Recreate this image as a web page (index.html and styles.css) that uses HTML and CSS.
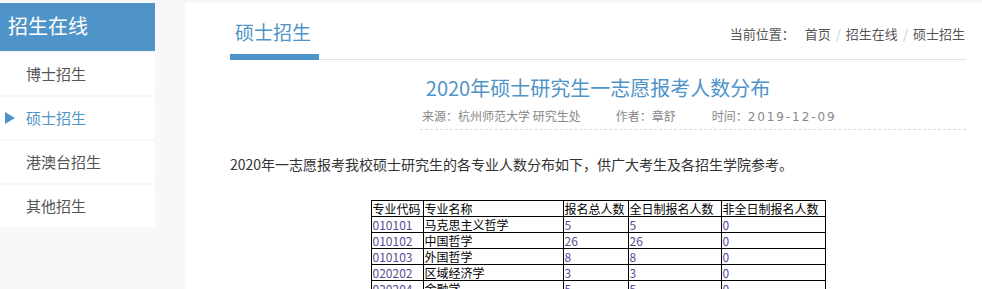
FILE: index.html
```html
<!DOCTYPE html>
<html lang="zh-CN">
<head>
<meta charset="utf-8">
<title>硕士招生</title>
<link rel="stylesheet" href="styles.css">
</head>
<body>
<div class="page">
  <aside class="sidebar">
    <div class="side-head">招生在线</div>
    <ul class="side-nav">
      <li class="side-item">博士招生</li>
      <li class="side-item active"><span class="arrow"></span>硕士招生</li>
      <li class="side-item">港澳台招生</li>
      <li class="side-item">其他招生</li>
    </ul>
  </aside>
  <main class="main">
    <div class="main-head">
      <div class="tab">硕士招生</div>
      <div class="crumbs">
        <span class="crumb-label">当前位置：</span>
        <span>首页</span><span class="sep">/</span><span>招生在线</span><span class="sep">/</span><span>硕士招生</span>
      </div>
    </div>
    <article class="article">
      <h1 class="art-title">2020年硕士研究生一志愿报考人数分布</h1>
      <div class="meta">
        <span class="m-src">来源：杭州师范大学 研究生处</span>
        <span class="m-auth">作者：章舒</span>
        <span class="m-time">时间：<span class="date">2019-12-09</span></span>
      </div>
      <p class="lead">2020年一志愿报考我校硕士研究生的各专业人数分布如下，供广大考生及各招生学院参考。</p>
      <table class="data">
        <tr class="hd"><td class="c1">专业代码</td><td class="c2">专业名称</td><td class="c3">报名总人数</td><td class="c4">全日制报名人数</td><td class="c5">非全日制报名人数</td></tr>
        <tr><td class="num">010101</td><td>马克思主义哲学</td><td class="num">5</td><td class="num">5</td><td class="num">0</td></tr>
        <tr><td class="num">010102</td><td>中国哲学</td><td class="num">26</td><td class="num">26</td><td class="num">0</td></tr>
        <tr><td class="num">010103</td><td>外国哲学</td><td class="num">8</td><td class="num">8</td><td class="num">0</td></tr>
        <tr><td class="num">020202</td><td>区域经济学</td><td class="num">3</td><td class="num">3</td><td class="num">0</td></tr>
        <tr><td class="num">020204</td><td>金融学</td><td class="num">5</td><td class="num">5</td><td class="num">0</td></tr>
      </table>
    </article>
  </main>
</div>
</body>
</html>
```
FILE: styles.css
```css
* { box-sizing: border-box; }
html, body { margin: 0; padding: 0; }
body {
  background: #f7f8fa;
  font-family: "Noto Sans CJK SC", "Noto Sans", sans-serif;
  color: #333;
  overflow: hidden;
  height: 289px;
}
.page {
  display: flex;
  gap: 30px;
  padding-top: 3px;
}
.sidebar {
  width: 155px;
  flex: none;
}
.side-head {
  height: 48px;
  background: #4f94c8;
  color: #fff;
  font-size: 20px;
  line-height: 46px;
  padding-left: 8px;
}
.side-nav {
  list-style: none;
  margin: 2px 0 0;
  padding: 0;
  display: flex;
  flex-direction: column;
  gap: 2px;
}
.side-item {
  height: 42px;
  background: #fff;
  font-size: 15px;
  line-height: 42px;
  color: #555;
  padding-left: 26px;
  position: relative;
}
.side-item.active { color: #4f94c8; }
.arrow {
  position: absolute;
  left: 5px;
  top: 15px;
  width: 0;
  height: 0;
  border-top: 6px solid transparent;
  border-bottom: 6px solid transparent;
  border-left: 10px solid #4f94c8;
}
.main {
  flex: 1;
  background: #fff;
  padding-left: 45px;
  padding-right: 16px;
  height: 300px;
}
.main-head {
  height: 57px;
  border-bottom: 1px solid #e2e2e2;
  display: flex;
  justify-content: space-between;
  align-items: flex-start;
}
.tab {
  width: 89px;
  height: 57px;
  border-bottom: 6px solid #4f94c8;
  color: #4f94c8;
  font-size: 19px;
  line-height: 20px;
  padding-top: 19px;
  padding-left: 5px;
  margin-bottom: -1px;
}
.crumbs {
  font-size: 13px;
  color: #555;
  line-height: 16px;
  padding-top: 23px;
  margin-right: 1px;
}
.crumb-label { margin-right: 7px; }
.sep { color: #ccc; margin: 0 5px; }
.art-title {
  margin: 15px 0 0;
  font-weight: normal;
  font-size: 20px;
  line-height: 26px;
  color: #4f94c8;
  text-align: center;
}
.meta {
  margin: 7px 0 0 190px;
  padding: 0 0 4px 2px;
  font-size: 12px;
  line-height: 16px;
  color: #888;
  border-bottom: 1px dashed #ddd;
  display: flex;
}
.m-src { margin-right: 35px; }
.m-auth { margin-right: 36px; }
.date {
  font-family: "DejaVu Sans", sans-serif;
  font-size: 12px;
  letter-spacing: 1.9px;
}
.lead {
  margin: 23px 0 0;
  font-size: 14px;
  line-height: 22px;
  color: #333;
}
.data {
  margin: 25px auto 0;
  border-collapse: collapse;
  width: 454px;
  table-layout: fixed;
  font-size: 12px;
  color: #000;
}
.data td {
  border: 1px solid #000;
  padding: 0 1px;
  height: 16px;
  line-height: 14px;
  white-space: nowrap;
  overflow: hidden;
}
.c1 { width: 52px; }
.c2 { width: 140px; }
.c3 { width: 65px; }
.c4 { width: 93px; }
.c5 { width: 104px; }
.data td.num { color: #5b4a96; }
```
